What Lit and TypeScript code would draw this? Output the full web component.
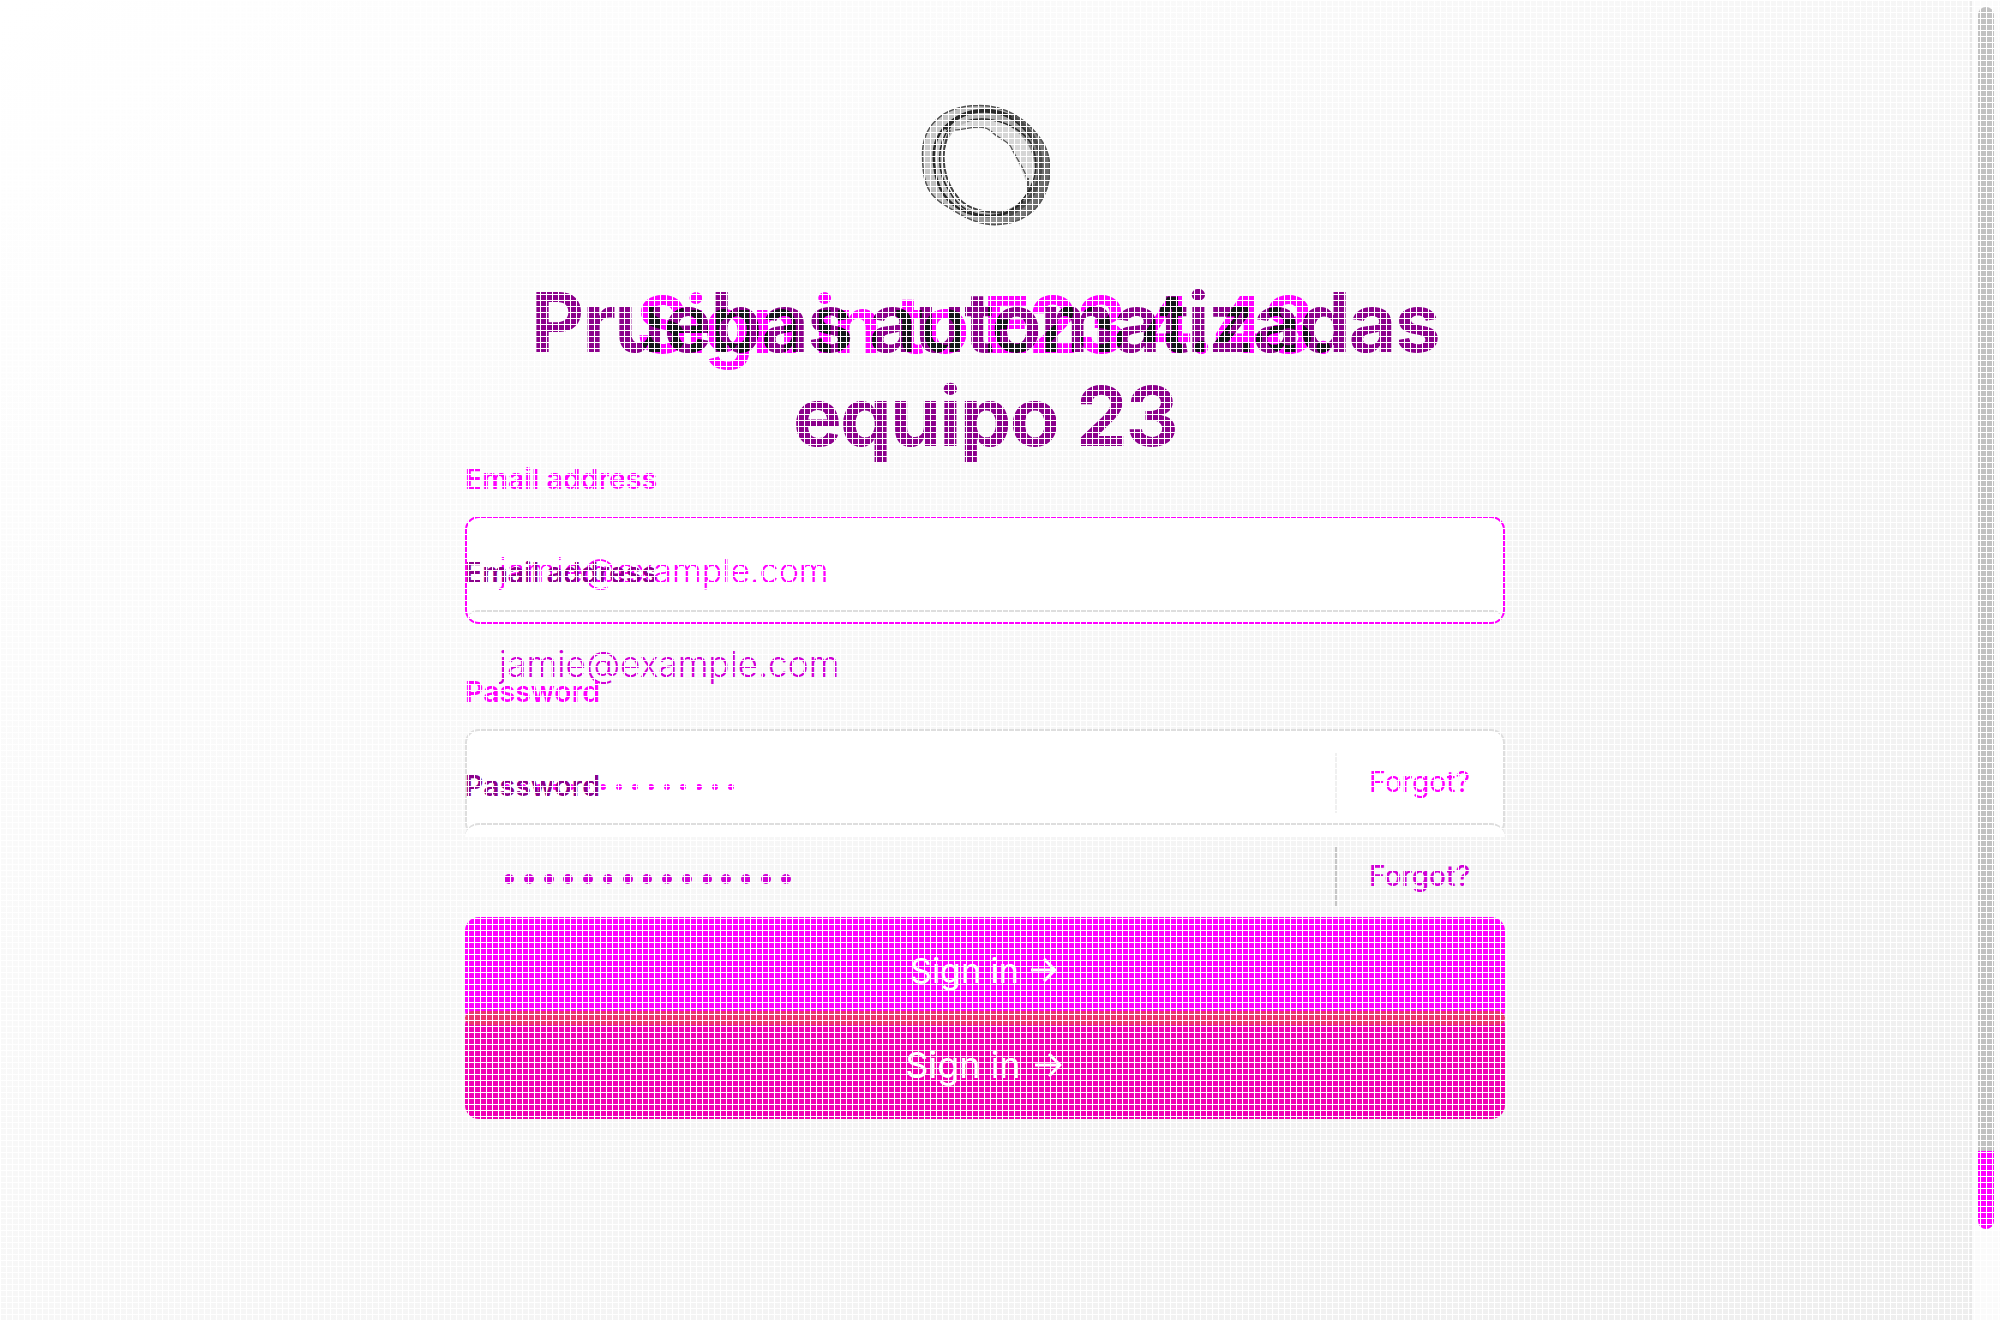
import { LitElement, html, css } from "lit";
import { customElement } from "lit/decorators.js";

@customElement("app-root")
export class AppRoot extends LitElement {
  static styles = css`
    :host { display: block; }
    * { box-sizing: border-box; }
    .page { position: relative; display: flex; width: 2000px; height: 1320px; overflow: hidden; font-family: Inter, "Open Sans", sans-serif; background: linear-gradient(143deg, #ffffff, #eeeeee); }
    .main { width: 1970px; display: flex; flex-direction: column; align-items: center; padding-top: 104px; }
    .logo { width: 130px; height: 122px; display: block; }
    .titles { position: relative; width: 1040px; height: 240px; margin-top: 60px; isolation: isolate; filter: url(#overlap); }
    .defs { position: absolute; width: 0; height: 0; }
    .title { position: absolute; left: 0; width: 100%; margin: 0; text-align: center; font-weight: 700; white-space: nowrap; }
    .old { top: -9px; color: #cccccc; font-size: 79px; line-height: 94px; letter-spacing: -2.6px; }
    .new { top: -10px; color: #808080; font-size: 82px; line-height: 94px; mix-blend-mode: multiply; letter-spacing: -1.75px; }
    .form { position: relative; width: 1040px; height: 660px; margin-top: -66px; }
    .form > * { position: absolute; left: 0; white-space: nowrap; }
    .label { font-size: 28.5px; line-height: 30px; font-weight: 600; color: #ff00ff; }
    .hint { left: 34px; line-height: 40px; font-weight: 300; color: #ff00ff; }
    .box { width: 1040px; height: 108px; border: 2px solid #dedede; border-radius: 14px; background: #fff; }
    .box.focus { border-color: #ff00ff; }
    .edge { width: 1040px; height: 14px; border-top: 2px solid #dedede; border-radius: 14px 14px 0 0; background: #fff; }
    .edge.b2 { left: 2px; width: 1036px; height: 10px; border-radius: 10px 10px 0 0; background: none; }
    .late { color: #8b008b; }
    .mid { color: #d000d6; }
    .rule { left: 870px; width: 2px; height: 60px; background: #f0f0f0; }
    .forgot { left: 904px; font-size: 28.4px; line-height: 30px; font-weight: 400; color: #ff00ff; }
    .forgot.mid { font-weight: 500; font-size: 28px; color: #d000d6; }
    .dots { display: flex; }
    .dots i { border-radius: 50%; background: currentColor; }
    .d1 { left: 39px; gap: 10px; color: #ff00ff; }
    .d1 i { width: 6px; height: 6px; }
    .d2 { left: 39px; gap: 9.75px; }
    .d2 i { width: 10px; height: 10px; }
    .btn { width: 1040px; height: 108px; border-radius: 14px; background: #ff00ff; color: #fff; display: flex; justify-content: center; align-items: center; }
    .btn.next { background: #f000b4; }
    .seam { width: 1040px; height: 14px; background: #eb346f; border-radius: 14px; }
    .arrow { fill: none; stroke: #fff; stroke-width: 3; display: block; }
    .bar { position: relative; width: 30px; height: 1320px; background: #fbfbfb; border-left: 2px solid #e9e9e9; padding: 7px 0 0 6px; }
    .thumb { width: 16px; height: 1144px; border-radius: 8px 8px 0 0; background: #c1c1c1; }
    .tail { width: 16px; height: 78px; border-radius: 0 0 8px 8px; background: #ff00ff; }
    .grid { position: absolute; inset: 0; background: repeating-linear-gradient(90deg, #fff 0 1px, transparent 1px 6px), repeating-linear-gradient(#fff 0 1px, transparent 1px 6px); }
    .y1 { top: 4px; } .y2 { top: 98px; } .y3 { top: 217px; } .y4 { top: 311px; }
    .b1 { top: 56px; } .b2 { top: 150px; } .b3 { top: 269px; } .b4 { top: 363px; }
    .h1 { top: 91px; font-size: 34.1px; } .h2 { top: 184px; font-size: 35.2px; }
    .f1 { top: 307px; } .f2 { top: 401px; } .r1 { top: 293px; } .r2 { top: 387px; background: #c6c6c6; }
    .d1 { top: 324px; } .d2 { top: 414px; }
    .s1 { top: 457px; font-size: 34px; gap: 12px; padding: 0 3px 2px 0; } .s2 { top: 551px; font-size: 36px; gap: 14px; padding-right: 3px; } .seam { top: 551px; }
  `;
  render() {
    const dots = Array.from({ length: 15 }, () => html`<i></i>`);
    return html`<div class="page">
      <svg class="defs"><filter id="overlap" color-interpolation-filters="sRGB"><feComponentTransfer>
        <feFuncR type="table" tableValues="0 0 0 .08 .08 .545 .6 .9 1 1 1"/><feFuncG type="table" tableValues="0 0 0 .09 .09 0 0 0 0 0 0"/><feFuncB type="table" tableValues="0 0 0 .1 .1 .545 .6 .9 1 1 1"/>
      </feComponentTransfer></filter></svg>
      <div class="main">
        <svg class="logo" viewBox="920 104 130 122">
          <defs><linearGradient id="ring" x1="0" y1="0.3" x2="1" y2="0.6"><stop offset="0" stop-color="#cccccc"/><stop offset=".55" stop-color="#a4a4a4"/><stop offset="1" stop-color="#666"/></linearGradient></defs>
          <path fill="url(#ring)" fill-rule="evenodd" d="M978 105C1004 105 1027 118 1042 141C1052 157 1053 178 1043 198C1034 216 1013 226 990 225C972 223 957 213 940 202C926 192 922 178 922 154C922 128 940 106 978 105ZM955 130C945 140 942 155 944 172C947 193 961 210 985 213C1005 215 1024 203 1028 190C1030 175 1018 162 1011 147C1007 140 999 139 992 132C983 123 969 129 955 130Z"/>
          <path fill="#d6d6d6" d="M955 129C968 119 990 116 1009 126C1030 139 1037 158 1034 178L1028 190C1024 170 1015 160 1009 144C1002 141 996 138 986 128Z"/>
          <g fill="none" stroke="#2a2a2a">
            <path stroke-width="4" d="M945 129C962 107 994 107 1012 118C1021 123 1028 130 1034 140"/>
            <path stroke-width="2.4" d="M958 117C935 130 931 148 935 171C939 199 961 217 989 216C1004 216 1017 210 1023 201"/>
            <path stroke-width="1.5" d="M951 126C935 145 937 174 950 192C963 217 995 223 1017 206C1033 190 1041 169 1032 145C1022 127 993 114 966 121"/>
            <path stroke-width="4" stroke="#4c4c4c" d="M1012 116C1034 130 1043 150 1040 172C1038 192 1025 208 1008 215"/>
            <path stroke-width="2" stroke="#444" d="M950 130C938 155 944 182 959 199C970 210 984 213 1004 212"/>
            <path stroke-width="1.500" d="M1028 178V193L1034 186"/>
            <path stroke-width="1.500" stroke="#555" d="M978 105.500C1004 105 1027 118 1042 141C1052 157 1053 178 1043 198C1034 216 1013 226 990 224.500C972 223 957 213 940 202C926 192 922.500 178 922.500 154C922.500 128 940 106 978 105.500"/>
            <path stroke-width="1.200" stroke="#555" d="M955 130C969 129 983 123 992 132C999 139 1007 140 1011 147C1018 162 1030 175 1028 190"/>
          </g>
        </svg>
        <div class="titles"><h1 class="title old">Sign in to E23 4.48.</h1><h1 class="title new">Pruebas automatizadas<br />equipo 23</h1></div>
        <div class="form">
          <div class="label y1">Email address</div>
          <div class="box focus b1"></div><div class="edge b2"></div>
          <div class="hint h1">jamie@example.com</div>
          <div class="label late y2">Email address</div>
          <div class="hint mid h2">jamie@example.com</div>
          <div class="label y3">Password</div>
          <div class="box b3"></div><div class="edge b4"></div>
          <div class="dots d1">${dots}</div><div class="label late y4">Password</div>
          <div class="rule r1"></div><div class="forgot f1">Forgot?</div>
          <div class="dots mid d2">${dots}</div>
          <div class="rule r2"></div><div class="forgot mid f2">Forgot?</div>
          <div class="btn s1"><span>Sign in</span><svg class="arrow" width="26" height="24"><path d="M0 12H24M13 1L24 12L13 23"/></svg></div>
          <div class="btn next s2"><span>Sign in</span><svg class="arrow" width="27" height="24"><path d="M0 12H25M14 1L25 12L14 23"/></svg></div>
          <div class="seam"></div>
        </div>
      </div>
      <div class="bar"><div class="thumb"></div><div class="tail"></div></div>
      <div class="grid"></div></div>`;
  }
}
